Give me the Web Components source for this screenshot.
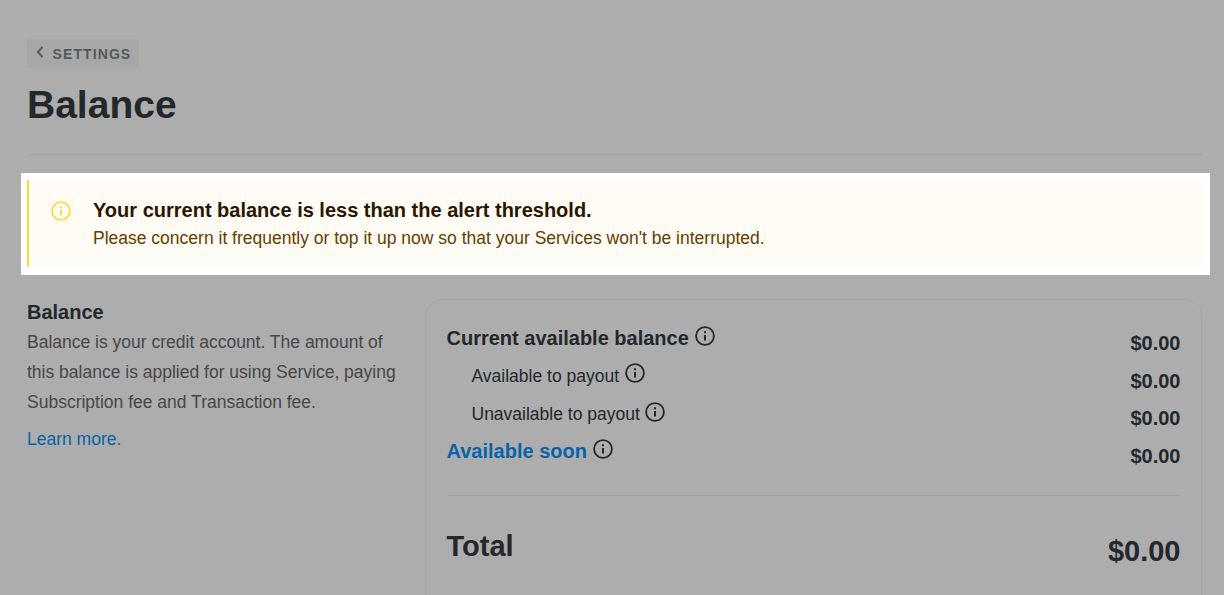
<!DOCTYPE html>
<html>
<head>
<meta charset="utf-8">
<title>Balance</title>
<style>
  html, body { margin: 0; height: 595px; overflow: hidden; background: #adadad; }
  body { font-family: "Liberation Sans", Arial, sans-serif; color: #24272c; }
</style>
</head>
<body>
<balance-page>
  <page-header title-text="Balance" back="SETTINGS"></page-header>
  <alert-banner heading="Your current balance is less than the alert threshold.">
    Please concern it frequently or top it up now so that your Services won't be interrupted.
  </alert-banner>
  <balance-section>
    <section-intro slot="intro" heading="Balance" link="Learn more.">
      Balance is your credit account. The amount of this balance is applied for using Service, paying Subscription fee and Transaction fee.
    </section-intro>
    <balance-card slot="card">
      <balance-row kind="main" label="Current available balance" amount="$0.00"></balance-row>
      <balance-row kind="sub" label="Available to payout" amount="$0.00" style="--icon-top:-1px"></balance-row>
      <balance-row kind="sub" label="Unavailable to payout" amount="$0.00" style="--label-top:1px"></balance-row>
      <balance-row kind="link" label="Available soon" amount="$0.00"></balance-row>
      <balance-total label="Total" amount="$0.00"></balance-total>
    </balance-card>
  </balance-section>
</balance-page>

<script>
const infoIcon = (size, color) => `
  <svg width="${size}" height="${size}" viewBox="0 0 20 20" fill="none" stroke="${color}" stroke-width="1.8" style="display:block">
    <circle cx="10" cy="10" r="8.9"/>
    <path d="M10 9v5.6" stroke-width="2"/>
    <path d="M10 5.2v2" stroke-width="2"/>
  </svg>`;

class BalancePage extends HTMLElement {
  connectedCallback() {
    this.attachShadow({ mode: 'open' });
    this.shadowRoot.innerHTML = `
      <style>
        :host { display: block; padding: 39px 22px 0 27px; }
      </style>
      <slot></slot>
    `;
  }
}

class PageHeader extends HTMLElement {
  connectedCallback() {
    this.attachShadow({ mode: 'open' });
    this.shadowRoot.innerHTML = `
      <style>
        :host { display: block; height: 115px; border-bottom: 1px solid #a3a3a3; }
        .back {
          display: inline-flex;
          align-items: center;
          height: 29px;
          width: 112px;
          box-sizing: border-box;
          padding-left: 9px;
          background: #a6a8a8;
          border-radius: 4px;
          color: #54585e;
          font-size: 14px;
          font-weight: 700;
          letter-spacing: 1.1px;
          text-decoration: none;
        }
        .back svg { margin-right: 8.5px; position: relative; top: -2px; }
        h1 {
          margin: 11px 0 0;
          font-size: 39px;
          line-height: 52px;
          font-weight: 700;
          color: #24272c;
        }
      </style>
      <a class="back" href="#">
        <svg width="8" height="12" viewBox="0 0 8 12" fill="none" stroke="#585c62" stroke-width="2"><path d="M6.5 1 1.8 6l4.7 5"/></svg>
        ${this.getAttribute('back')}
      </a>
      <h1>${this.getAttribute('title-text')}</h1>
    `;
  }
}

class AlertBanner extends HTMLElement {
  connectedCallback() {
    this.attachShadow({ mode: 'open' });
    this.shadowRoot.innerHTML = `
      <style>
        :host {
          display: block;
          background: #fff;
          margin: 18px -8px 0 -6px;
          padding: 7px 8px 8px 6px;
        }
        .box {
          display: flex;
          height: 87px;
          box-sizing: border-box;
          border-left: 2px solid #ffd93d;
          background: #fffcf5;
          padding: 19px 0 0 22px;
        }
        .icon { margin: 2px 22px 0 0; }
        .head {
          font-size: 20px;
          line-height: 22px;
          font-weight: 700;
          color: #2c1500;
        }
        .text {
          font-size: 17.5px;
          line-height: 22px;
          margin-top: 6px;
          color: #663c00;
        }
      </style>
      <div class="box">
        <div class="icon">${infoIcon(20, '#ffd93d')}</div>
        <div>
          <div class="head">${this.getAttribute('heading')}</div>
          <div class="text"><slot></slot></div>
        </div>
      </div>
    `;
  }
}

class BalanceSection extends HTMLElement {
  connectedCallback() {
    this.attachShadow({ mode: 'open' });
    this.shadowRoot.innerHTML = `
      <style>
        :host {
          display: grid;
          grid-template-columns: 375px 1fr;
          column-gap: 23.5px;
          margin-top: 24px;
        }
      </style>
      <slot name="intro"></slot>
      <slot name="card"></slot>
    `;
  }
}

class SectionIntro extends HTMLElement {
  connectedCallback() {
    this.attachShadow({ mode: 'open' });
    this.shadowRoot.innerHTML = `
      <style>
        :host { display: block; padding-top: 2px; }
        h3 { margin: 0 0 4px; font-size: 20px; line-height: 22px; font-weight: 700; color: #24272c; }
        p { margin: 0; font-size: 17.5px; line-height: 30px; color: #45474a; }
        a { display: block; margin-top: 7px; font-size: 17.5px; line-height: 30px; color: #0a62a8; text-decoration: none; }
      </style>
      <h3>${this.getAttribute('heading')}</h3>
      <p><slot></slot></p>
      <a href="#">${this.getAttribute('link')}</a>
    `;
  }
}

class BalanceCard extends HTMLElement {
  connectedCallback() {
    this.attachShadow({ mode: 'open' });
    this.shadowRoot.innerHTML = `
      <style>
        :host {
          display: block;
          border: 1px solid #a6a6a6;
          border-radius: 16px;
          padding: 26px 20.5px 40px 20px;
          height: 400px;
        }
      </style>
      <slot></slot>
    `;
  }
}

class BalanceRow extends HTMLElement {
  connectedCallback() {
    const kind = this.getAttribute('kind');
    this.attachShadow({ mode: 'open' });
    this.shadowRoot.innerHTML = `
      <style>
        :host { display: flex; justify-content: space-between; height: 37.5px; }
        .label { display: flex; align-items: flex-start; gap: 6px; font-size: 20px; line-height: 24px; padding-top: var(--label-top, 0); }
        .label svg { margin-top: var(--icon-top, 0); }
        .main { font-weight: 700; }
        .sub { font-size: 17.5px; padding-left: 25px; gap: 5.5px; }
        .link { font-weight: 700; color: #0a62a8; }
        .amount { font-size: 20px; line-height: 24px; font-weight: 700; padding-top: 5px; }
      </style>
      <div class="label ${kind}">
        <span>${this.getAttribute('label')}</span>
        ${infoIcon(20, '#24272c')}
      </div>
      <div class="amount">${this.getAttribute('amount')}</div>
    `;
  }
}

class BalanceTotal extends HTMLElement {
  connectedCallback() {
    this.attachShadow({ mode: 'open' });
    this.shadowRoot.innerHTML = `
      <style>
        :host {
          display: flex;
          justify-content: space-between;
          border-top: 1px solid #a3a3a3;
          margin-top: 19px;
          padding-top: 32px;
          font-weight: 700;
        }
        .label { font-size: 29px; line-height: 36px; }
        .amount { font-size: 29px; line-height: 36px; padding-top: 5px; }
      </style>
      <div class="label">${this.getAttribute('label')}</div>
      <div class="amount">${this.getAttribute('amount')}</div>
    `;
  }
}

customElements.define('balance-page', BalancePage);
customElements.define('page-header', PageHeader);
customElements.define('alert-banner', AlertBanner);
customElements.define('balance-section', BalanceSection);
customElements.define('section-intro', SectionIntro);
customElements.define('balance-card', BalanceCard);
customElements.define('balance-row', BalanceRow);
customElements.define('balance-total', BalanceTotal);
</script>
</body>
</html>
